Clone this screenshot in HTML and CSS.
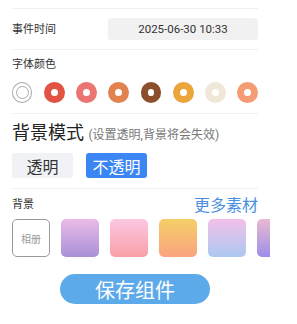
FILE: index.html
```html
<!DOCTYPE html>
<html>
  <head>
    <meta charset='utf-8'>
    <meta name="viewport" content="width=device-width, initial-scale=1">
    <title>组件设置</title>
    <link rel="stylesheet" href="styles.css">
  </head>
  <body>
    <div class="page">
      <div class="section row_time">
        <div class="label">事件时间</div>
        <div class="field">2025-06-30 10:33</div>
      </div>

      <div class="section colors">
        <div class="label">字体颜色</div>
        <div class="swatches">
          <div class="swatch none"><span></span></div>
          <div class="swatch" style="border-color:#e15443"></div>
          <div class="swatch" style="border-color:#ea7572"></div>
          <div class="swatch" style="border-color:#e2834f"></div>
          <div class="swatch" style="border-color:#8c4f2d"></div>
          <div class="swatch" style="border-color:#eca53b"></div>
          <div class="swatch" style="border-color:#efe8d9"></div>
          <div class="swatch" style="border-color:#f49d75"></div>
        </div>
      </div>

      <div class="section mode">
        <div class="title">背景模式 <small>(设置透明,背景将会失效)</small></div>
        <div class="toggles">
          <button type="button" class="toggle">透明</button>
          <button type="button" class="toggle active">不透明</button>
        </div>
      </div>

      <div class="section background">
        <div class="bg_head">
          <div class="label">背景</div>
          <a class="more">更多素材</a>
        </div>
        <div class="tiles">
          <div class="tile album">相册</div>
          <div class="tile" style="background:linear-gradient(#ebbbe8,#a890d7)"></div>
          <div class="tile" style="background:linear-gradient(#fdc8e2,#f89fa7)"></div>
          <div class="tile" style="background:linear-gradient(#f5cf68,#faa37f)"></div>
          <div class="tile" style="background:linear-gradient(#f2c0e8,#abc9f1)"></div>
          <div class="tile" style="background:linear-gradient(#eab9d0,#9d8fea)"></div>
        </div>
      </div>

      <button type="button" class="save">保存组件</button>
    </div>
  </body>
</html>
```

FILE: styles.css
```css
body {
  margin: 0;
  background: #fff;
  font-family: Roboto, "Noto Sans CJK SC", sans-serif;
  color: #333;
}

.page {
  padding: 8px 0 0 12px;
}

.section {
  width: 246px;
  border-top: 1px solid #f0f0f0;
}

.label {
  font-size: 11px;
  line-height: 15px;
  color: #333;
}

.row_time {
  height: 40px;
  display: flex;
  align-items: center;
  justify-content: space-between;
}

.field {
  width: 150px;
  height: 22px;
  line-height: 22px;
  background: #f1f1f1;
  border-radius: 3px;
  text-align: center;
  font-size: 11.5px;
  color: #333;
}

.colors {
  padding: 7px 0 10px;
}

.swatches {
  display: flex;
  gap: 11.5px;
  margin-top: 10px;
}

.swatch {
  width: 21px;
  height: 21px;
  box-sizing: border-box;
  border: 7px solid #ccc;
  border-radius: 50%;
}

.swatch.none {
  border: 1px solid #aaa;
  display: flex;
  align-items: center;
  justify-content: center;
}

.swatch.none span {
  width: 11px;
  height: 11px;
  border: 1px solid #aaa;
  border-radius: 50%;
}

.mode {
  padding: 7px 0 10px;
}

.title {
  font-size: 18px;
  line-height: 24px;
  color: #222;
}

.title small {
  font-size: 12px;
  color: #777;
}

.toggles {
  display: flex;
  gap: 13px;
  margin-top: 6px;
}

.toggle {
  width: 61px;
  height: 25px;
  border: 0;
  border-radius: 3px;
  background: #f0f2f5;
  color: #333;
  font-family: inherit;
  font-size: 16px;
  padding: 0;
}

.toggle.active {
  background: #3b86f2;
  color: #fff;
}

.background {
  width: 258px;
  border-top: 0;
  padding-top: 5px;
  overflow: hidden;
}

.background::before {
  content: "";
  display: block;
  width: 246px;
  border-top: 1px solid #f0f0f0;
  margin-top: -5px;
  margin-bottom: 5px;
}

.bg_head {
  width: 246px;
  display: flex;
  align-items: center;
  justify-content: space-between;
  height: 20px;
}

.more {
  font-size: 16px;
  color: #4a8fe0;
}

.tiles {
  display: flex;
  gap: 11px;
  margin-top: 5px;
}

.tile {
  flex: none;
  width: 38px;
  height: 38px;
  border-radius: 5px;
}

.tile.album {
  box-sizing: border-box;
  border: 1px solid #999;
  color: #999;
  font-size: 10px;
  display: flex;
  align-items: center;
  justify-content: center;
}

.save {
  display: block;
  margin: 17px 0 0 48px;
  width: 150px;
  height: 30px;
  border: 0;
  border-radius: 15px;
  background: #5caae9;
  color: #fff;
  font-family: inherit;
  font-size: 20px;
  padding: 0;
}
```
